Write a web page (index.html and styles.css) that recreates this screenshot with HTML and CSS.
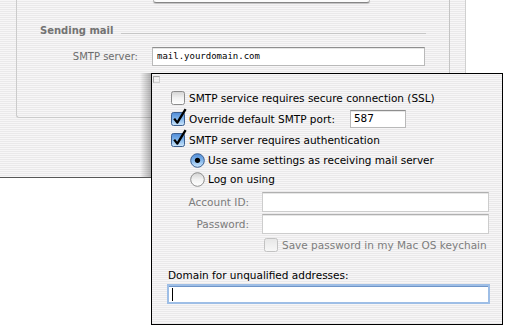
FILE: index.html
```html
<!DOCTYPE html>
<html>
<head>
<meta charset="utf-8">
<link rel="stylesheet" href="styles.css">
</head>
<body>
<svg class="defs" width="0" height="0" aria-hidden="true">
  <defs>
    <linearGradient id="gBlue" x1="0" y1="0" x2="0" y2="1">
      <stop offset="0" stop-color="#4f8ad6"/>
      <stop offset="0.45" stop-color="#7db2ea"/>
      <stop offset="1" stop-color="#cde7fc"/>
    </linearGradient>
    <linearGradient id="gWhite" x1="0" y1="0" x2="0" y2="1">
      <stop offset="0" stop-color="#d2d2d2"/>
      <stop offset="0.5" stop-color="#f2f2f2"/>
      <stop offset="1" stop-color="#ffffff"/>
    </linearGradient>
    <linearGradient id="gDis" x1="0" y1="0" x2="0" y2="1">
      <stop offset="0" stop-color="#e6e6e6"/>
      <stop offset="1" stop-color="#f8f8f8"/>
    </linearGradient>
  </defs>
</svg>
<div class="desk">
  <div class="win back">
    <div class="group">
      <div class="btn-edge"></div>
      <div class="sect"><span class="sect-title">Sending mail</span><span class="sect-rule"></span></div>
      <div class="frow"><span class="flabel">SMTP server:</span><span class="field field-smtp">mail.yourdomain.com</span></div>
    </div>
    <div class="sheet-shadow"></div>
  </div>

  <div class="win sheet">
    <span class="grow-box"></span>
    <div class="row row-ssl ind1">
      <svg class="cbx" width="16" height="18" viewBox="0 0 16 18"><rect x="0.5" y="4.5" width="13" height="13" rx="2" fill="url(#gWhite)" stroke="#8c8c8c"/></svg>
      <span>SMTP service requires secure connection (SSL)</span>
    </div>
    <div class="row row-port ind1">
      <svg class="cbx" width="16" height="18" viewBox="0 0 16 18"><rect x="0.5" y="4.5" width="13" height="13" rx="2" fill="url(#gBlue)" stroke="#3d5f8f"/><path d="M3.2 10.6 L6.3 14.6 L14.6 1.2" fill="none" stroke="#000" stroke-width="2.3" stroke-linejoin="round"/></svg>
      <span class="port-label">Override default SMTP port:</span>
      <span class="field field-port">587</span>
    </div>
    <div class="row row-auth ind1">
      <svg class="cbx" width="16" height="18" viewBox="0 0 16 18"><rect x="0.5" y="4.5" width="13" height="13" rx="2" fill="url(#gBlue)" stroke="#3d5f8f"/><path d="M3.2 10.6 L6.3 14.6 L14.6 1.2" fill="none" stroke="#000" stroke-width="2.3" stroke-linejoin="round"/></svg>
      <span>SMTP server requires authentication</span>
    </div>
    <div class="row row-r1 ind2">
      <svg class="rad" width="15" height="15" viewBox="0 0 15 15"><circle cx="7.5" cy="7.5" r="6.8" fill="url(#gBlue)" stroke="#3d5f8f"/><circle cx="7.5" cy="7.3" r="2.6" fill="#000"/></svg>
      <span>Use same settings as receiving mail server</span>
    </div>
    <div class="row row-r2 ind2">
      <svg class="rad" width="15" height="15" viewBox="0 0 15 15"><circle cx="7.5" cy="7.5" r="6.8" fill="url(#gWhite)" stroke="#8c8c8c"/></svg>
      <span>Log on using</span>
    </div>
    <div class="row row-acct">
      <span class="dlabel">Account ID:</span>
      <span class="field field-wide"></span>
    </div>
    <div class="row row-pwd">
      <span class="dlabel">Password:</span>
      <span class="field field-wide"></span>
    </div>
    <div class="row row-key">
      <svg class="cbx" width="16" height="18" viewBox="0 0 16 18"><rect x="0.5" y="4.5" width="13" height="13" rx="2" fill="url(#gDis)" stroke="#c2c2c2"/></svg>
      <span class="dis">Save password in my Mac OS keychain</span>
    </div>
    <div class="row row-dom">
      <span>Domain for unqualified addresses:</span>
    </div>
    <div class="row row-domin">
      <span class="field field-focus"><span class="caret"></span></span>
    </div>
  </div>
</div>
</body>
</html>
```

FILE: styles.css
```css
html, body {
  margin: 0;
  padding: 0;
  background: #ffffff;
}

.defs {
  position: absolute;
  width: 0;
  height: 0;
}

.desk {
  position: relative;
  width: 507px;
  height: 326px;
  overflow: hidden;
  background: #ffffff;
  font-family: "DejaVu Sans", "Liberation Sans", sans-serif;
}

.win {
  position: absolute;
  box-sizing: border-box;
  background: repeating-linear-gradient(to bottom, #f7f6f7 0px, #f7f6f7 1px, #eae9ea 1px, #eae9ea 2px);
}

/* background preferences window */
.back {
  left: 0;
  top: 0;
  width: 466px;
  height: 178px;
  border-right: 1px solid #d0d0d0;
  border-bottom: 1px solid #575757;
}

.group {
  box-sizing: border-box;
  margin-left: 16px;
  width: 434px;
  height: 118px;
  border-left: 1px solid #cbcbcb;
  border-right: 1px solid #c4c4c4;
  border-bottom: 1px solid #cbcbcb;
  border-radius: 0 0 3px 3px;
}

.btn-edge {
  margin-left: 136px;
  width: 217px;
  height: 3px;
  box-sizing: border-box;
  background: #fbfbfb;
  border-left: 1px solid #b8b8b8;
  border-right: 1px solid #b8b8b8;
  border-bottom: 1px solid #858585;
  border-radius: 0 0 3px 3px;
  box-shadow: 0 1px 1px rgba(0, 0, 0, 0.18);
}

.sect {
  display: flex;
  align-items: center;
  margin-top: 20px;
  height: 14px;
  padding-left: 23px;
}

.sect-title {
  font-size: 10px;
  font-weight: bold;
  color: #737373;
  white-space: nowrap;
}

.sect-rule {
  flex: 1;
  height: 1px;
  margin: 6px 23px 0 8px;
  background: #c6c6c6;
}

.frow {
  display: flex;
  margin-top: 10px;
  height: 19px;
}

.flabel {
  width: 121px;
  text-align: right;
  font-size: 10px;
  line-height: 19px;
  color: #6c6c6c;
}

.field {
  box-sizing: border-box;
  display: block;
  background: #ffffff;
  border: 1px solid #b9b9b9;
  border-top-color: #8e8e8e;
  box-shadow: inset 0 1px 0 #e6e6e6;
}

.field-smtp {
  margin-left: 14px;
  width: 273px;
  height: 19px;
  padding-left: 4px;
  font-family: "DejaVu Sans Mono", "Liberation Mono", monospace;
  font-size: 9px;
  line-height: 17px;
  color: #000;
}

.sheet-shadow {
  position: absolute;
  left: 140px;
  top: 73px;
  width: 11px;
  height: 104px;
  background: linear-gradient(to right, rgba(0, 0, 0, 0), rgba(0, 0, 0, 0.28));
}

/* the sheet */
.sheet {
  left: 151px;
  top: 73px;
  width: 352px;
  height: 252px;
  border: 1px solid #000;
  display: flex;
  flex-direction: column;
  font-size: 10.5px;
  color: #000;
}

.grow-box {
  position: absolute;
  left: 1px;
  top: 2px;
  width: 7px;
  height: 7px;
  box-sizing: border-box;
  border: 1px solid #a6a6a6;
  border-right-color: #d0d0d0;
  border-bottom-color: #d0d0d0;
}

.row {
  display: flex;
  align-items: center;
  height: 16px;
  white-space: nowrap;
}

.ind1 { padding-left: 19px; }
.ind2 { padding-left: 38px; }

.cbx {
  display: block;
  flex: none;
  margin-top: -4px;
  margin-right: 2px;
}

.rad {
  display: block;
  flex: none;
  margin-right: 3px;
}

.row-ssl { margin-top: 16px; }
.row-port { margin-top: 3px; height: 20px; }
.row-auth { margin-top: 3px; }
.row-r1 { margin-top: 4px; }
.row-r2 { margin-top: 3px; }
.row-acct { margin-top: 5px; height: 20px; }
.row-pwd { margin-top: 2px; height: 20px; }
.row-key { margin-top: 3px; padding-left: 112px; }
.row-dom { margin-top: 14px; padding-left: 16px; }
.row-domin { margin-top: 1px; height: 20px; padding-left: 15px; }

.port-label {
  width: 161px;
}

.field-port {
  width: 56px;
  height: 18px;
  padding-left: 3px;
  font-family: "DejaVu Sans Mono", "Liberation Mono", monospace;
  font-size: 11px;
  line-height: 15px;
}

.dlabel {
  width: 97px;
  text-align: right;
  color: #7b7b7b;
}

.field-wide {
  margin-left: 13px;
  width: 227px;
  height: 20px;
  border-color: #cdcdcd;
  border-top-color: #b0b0b0;
}

.dis {
  color: #7d7d7d;
}

.field-focus {
  width: 323px;
  height: 20px;
  border: 2px solid #9ebee6;
  box-shadow: inset 0 1px 0 #6f95c8;
  padding: 2px 0 0 3px;
}

.caret {
  display: block;
  width: 1px;
  height: 13px;
  background: #000;
}
```
